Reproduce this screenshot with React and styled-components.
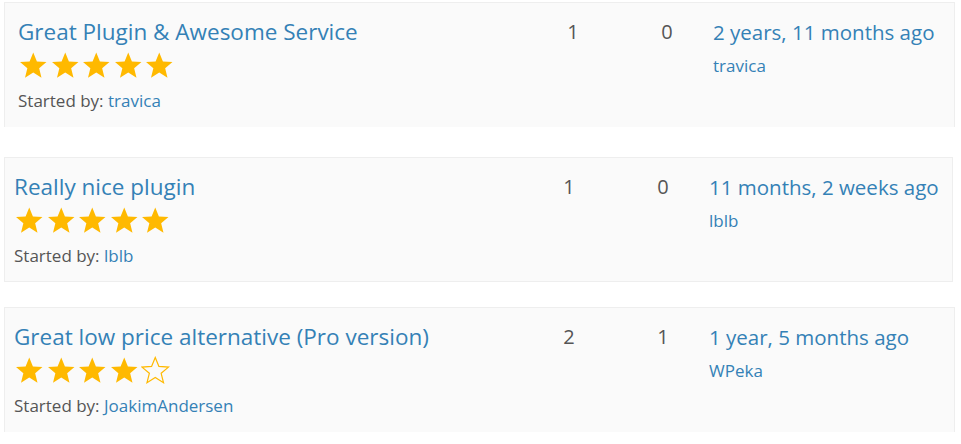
import React from 'react';
import styled, { createGlobalStyle } from 'styled-components';

const GlobalStyle = createGlobalStyle`
  body {
    margin: 0;
    background: #ffffff;
    font-family: 'Open Sans', 'Noto Sans', sans-serif;
  }
`;

const Page = styled.div`
  display: flex;
  flex-direction: column;
  padding: 2px 0 0 4px;
  width: 951px;
`;

const Topic = styled.div`
  display: grid;
  grid-template-columns: 1fr 124px 64px 255px;
  height: 125px;
  box-sizing: border-box;
  background: #fafafa;
  border: 1px solid #eeeeee;
  border-bottom: ${props => (props.open ? 'none' : '1px solid #eeeeee')};
  margin-bottom: ${props => props.gap}px;
  padding: 14px ${props => props.right}px 0 ${props => props.inset}px;
  width: ${props => props.w}px;
`;

const Main = styled.div`
  display: flex;
  flex-direction: column;
`;

const Title = styled.a`
  font-size: 22.5px;
  line-height: 30px;
  color: #3481b6;
  text-decoration: none;
  white-space: nowrap;
`;

const Stars = styled.div`
  display: flex;
  gap: 3px;
  margin: 4px 0 0 1px;
`;

const StartedBy = styled.div`
  margin-top: 10px;
  font-size: 17px;
  line-height: 22px;
  color: #555555;
`;

const Person = styled.a`
  color: #3481b6;
  text-decoration: none;
`;

const Count = styled.div`
  font-size: 20px;
  line-height: 30px;
  color: #555555;
  text-align: center;
`;

const Fresh = styled.div`
  display: flex;
  flex-direction: column;
  padding-left: 14px;
`;

const Ago = styled.a`
  font-size: 20.5px;
  line-height: 30px;
  color: #3481b6;
  text-decoration: none;
  white-space: nowrap;
`;

const Author = styled.a`
  margin-top: 8px;
  font-size: 17px;
  line-height: 22px;
  color: #3481b6;
  text-decoration: none;
`;

const STAR = 'M14 1.5 L17.6 10.2 L27 10.9 L19.8 17 L22.1 26.2 L14 21.2 L5.9 26.2 L8.2 17 L1 10.9 L10.4 10.2 Z';

function Star({ filled }) {
  return (
    <svg width="28.5" height="28.5" viewBox="0 0 28 28">
      <path
        d={STAR}
        fill={filled ? '#ffb900' : 'none'}
        stroke="#ffb900"
        strokeWidth={filled ? 0 : 1.2}
        strokeLinejoin="miter"
      />
    </svg>
  );
}

const topics = [
  { title: 'Great Plugin & Awesome Service', by: 'travica', rating: 5, voices: 1, replies: 0, ago: '2 years, 11 months ago', last: 'travica', inset: 13, right: 0, gap: 30, w: 951, open: true },
  { title: 'Really nice plugin', by: 'lblb', rating: 5, voices: 1, replies: 0, ago: '11 months, 2 weeks ago', last: 'lblb', inset: 9, right: 2, gap: 25, w: 949 },
  { title: 'Great low price alternative (Pro version)', by: 'JoakimAndersen', rating: 4, voices: 2, replies: 1, ago: '1 year, 5 months ago', last: 'WPeka', inset: 9, right: 4, gap: 0, w: 951, open: true },
];

export default function App() {
  return (
    <>
      <GlobalStyle />
      <Page>
        {topics.map(t => (
          <Topic key={t.title} inset={t.inset} right={t.right} gap={t.gap} w={t.w} open={t.open}>
            <Main>
              <Title href="#">{t.title}</Title>
              <Stars>
                {[1, 2, 3, 4, 5].map(i => (
                  <Star key={i} filled={i <= t.rating} />
                ))}
              </Stars>
              <StartedBy>
                Started by: <Person href="#">{t.by}</Person>
              </StartedBy>
            </Main>
            <Count>{t.voices}</Count>
            <Count>{t.replies}</Count>
            <Fresh>
              <Ago href="#">{t.ago}</Ago>
              <Author href="#">{t.last}</Author>
            </Fresh>
          </Topic>
        ))}
      </Page>
    </>
  );
}
